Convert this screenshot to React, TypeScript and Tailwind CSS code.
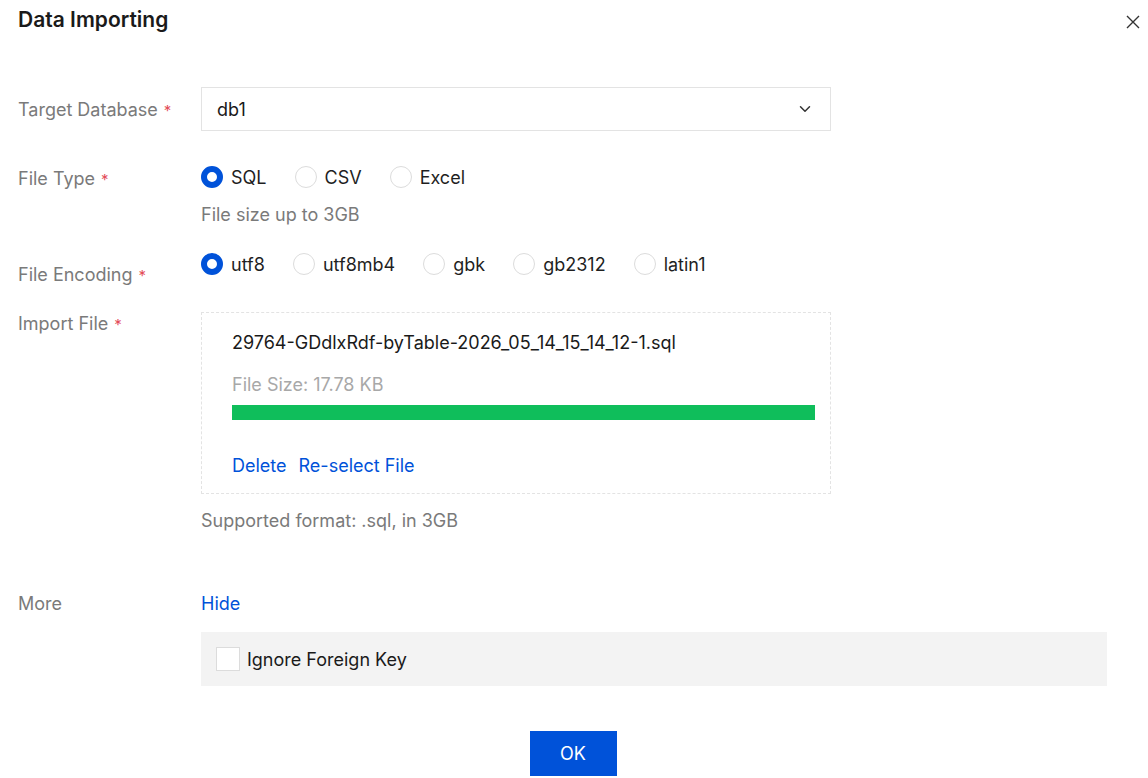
import { ChevronDown } from "lucide-react"

const FONT = "font-['Inter','Noto_Sans',sans-serif]"

function Radio({ label, checked }: { label: string; checked?: boolean }) {
  return (
    <label className="flex items-center gap-[8px] mr-[28px] cursor-pointer">
      {checked ? (
        <span className="w-[22px] h-[22px] rounded-full border-[6px] border-[#0052d9] bg-white" />
      ) : (
        <span className="w-[22px] h-[22px] rounded-full border border-[#dcdcdc] bg-white" />
      )}
      <span className="text-[18px] text-[#1f1f1f]">{label}</span>
    </label>
  )
}

function Label({ text, required, className }: { text: string; required?: boolean; className?: string }) {
  return (
    <div className={`w-[183px] shrink-0 text-[18px] text-[#7a7a7a] ${className ?? ""}`}>
      {text}
      {required && <span className="text-[#e34d59] ml-[6px] text-[15px]">*</span>}
    </div>
  )
}

export default function App() {
  return (
    <div className={`w-[1148px] h-[778px] bg-white overflow-hidden ${FONT}`}>
      {/* Header */}
      <div className="flex items-start justify-between pl-[18px] pr-[7px] pt-[6px]">
        <h1 className="text-[21px] leading-7 font-semibold text-[#1a1a1a]">Data Importing</h1>
        <button className="mt-[8px] w-[16px] h-[16px] flex items-center justify-center text-[#333]">
          <svg width="14" height="14" viewBox="0 0 14 14" fill="none" stroke="currentColor" strokeWidth="1.4">
            <path d="M1 1L13 13M13 1L1 13" />
          </svg>
        </button>
      </div>

      <div className="pl-[18px] mt-[53px]">
        {/* Target Database */}
        <div className="flex items-center">
          <Label text="Target Database" required />
          <div className="w-[630px] h-[44px] border border-[#e3e3e3] flex items-center justify-between pl-[15px] pr-[16px]">
            <span className="text-[18px] text-[#1a1a1a]">db1</span>
            <ChevronDown size={18} strokeWidth={2} className="text-[#333]" />
          </div>
        </div>

        {/* File Type */}
        <div className="flex mt-[30px]">
          <Label text="File Type" required className="leading-[32px] pt-[2px]" />
          <div className="flex flex-col">
            <div className="flex items-center h-[32px]">
              <Radio label="SQL" checked />
              <Radio label="CSV" />
              <Radio label="Excel" />
            </div>
            <div className="mt-[10px] text-[18px] leading-6 text-[#7a7a7a]">File size up to 3GB</div>
          </div>
        </div>

        {/* File Encoding */}
        <div className="flex mt-[21px]">
          <Label text="File Encoding" required className="leading-6 pt-[15px]" />
          <div className="flex items-center h-[32px]">
            <Radio label="utf8" checked />
            <Radio label="utf8mb4" />
            <Radio label="gbk" />
            <Radio label="gb2312" />
            <Radio label="latin1" />
          </div>
        </div>

        {/* Import File */}
        <div className="flex mt-[24px]">
          <Label text="Import File" required className="leading-6" />
          <div className="flex flex-col">
            <div className="w-[630px] border border-dashed border-[#e3e3e3] pl-[30px] pr-[15px] pt-[18px] pb-[15px]">
              <div className="text-[18px] leading-6 text-[#1a1a1a]">29764-GDdlxRdf-byTable-2026_05_14_15_14_12-1.sql</div>
              <div className="mt-[18px] text-[18px] leading-6 text-[#a8a8a8]">File Size: 17.78 KB</div>
              <div className="mt-[8px] h-[15px] bg-[#0fbe5b]" />
              <div className="mt-[34px] flex gap-[12px] text-[18px] leading-6 text-[#0052d9]">
                <span>Delete</span>
                <span>Re-select File</span>
              </div>
            </div>
            <div className="mt-[15px] text-[18px] leading-6 text-[#7a7a7a]">Supported format: .sql, in 3GB</div>
          </div>
        </div>

        {/* More */}
        <div className="flex mt-[59px]">
          <Label text="More" className="leading-6" />
          <span className="text-[18px] leading-6 text-[#0052d9]">Hide</span>
        </div>
        <div className="flex mt-[16px]">
          <div className="w-[183px] shrink-0" />
          <div className="w-[906px] h-[54px] bg-[#f3f3f3] flex items-center pl-[15px] gap-[7px]">
            <span className="w-[24px] h-[24px] border border-[#dcdcdc] bg-white" />
            <span className="text-[18px] text-[#1a1a1a]">Ignore Foreign Key</span>
          </div>
        </div>

        {/* Footer */}
        <div className="flex justify-center mt-[45px] pr-[20px]">
          <button className="w-[87px] h-[45px] bg-[#0052d9] text-white text-[18px]">OK</button>
        </div>
      </div>
    </div>
  )
}
